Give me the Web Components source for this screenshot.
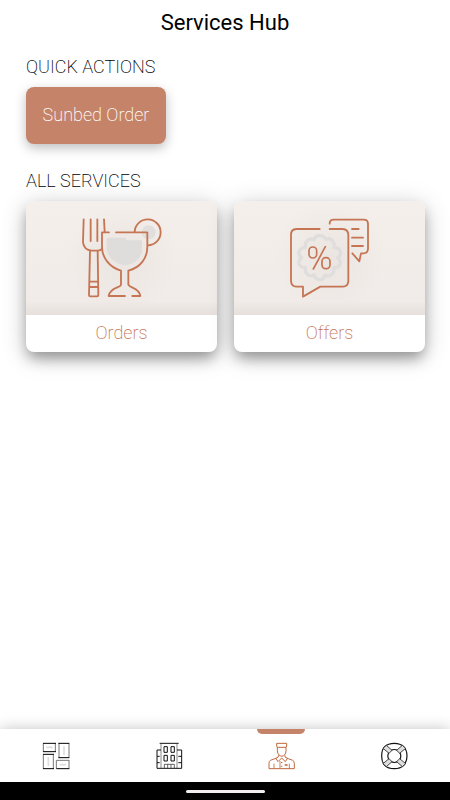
<!DOCTYPE html>
<html lang="en">
<head>
<meta charset="utf-8">
<meta name="viewport" content="width=device-width, initial-scale=1">
<title>Services Hub</title>
<style>
body {
  margin: 0;
  background: #fff;
  color: #000;
  font-family: Roboto, "Liberation Sans", sans-serif;
}
</style>
</head>
<body>
<hub-app>
  <hub-section title="QUICK ACTIONS">
    <quick-action>Sunbed Order</quick-action>
  </hub-section>
  <hub-section title="ALL SERVICES">
    <service-grid>
      <service-card icon="orders">Orders</service-card>
      <service-card icon="offers">Offers</service-card>
    </service-grid>
  </hub-section>
  <tab-bar slot="footer"></tab-bar>
</hub-app>

<script>
const icons = {
  orders: `
<svg viewBox="36 39 240 240" fill="none" stroke="#c67554" stroke-width="5.5" stroke-linecap="round" stroke-linejoin="round" aria-hidden="true">
  <circle cx="236" cy="82" r="21" fill="#e0dfde" stroke="none"/>
  <path d="M114 98H165Q169 98 169 106H216V140Q206 176 165 181Q119 172 110 136V102Q110 98 114 98Z" fill="#dedddc" stroke="none"/>
  <path d="M41 43L39 112Q42 135 65 137H84Q91 136 96 132M62 43V108M82 43V108M102 43L104 80"/>
  <path d="M60 139L57 270Q57 274 61 274H81Q85 274 85 270L83 139M60 230H84M60 246H84"/>
  <path d="M117 82H96V125C96 158 119 188 153 197V240C150 249 120 247 116 273H165M138 82H232V125C232 160 211 188 175 197V239C180 250 207 247 211 273H187"/>
  <path d="M194 80A39 39 0 1 1 234 121"/>
</svg>`,
  offers: `
<svg viewBox="30 39 240 240" fill="none" stroke="#c67554" stroke-width="5.5" stroke-linecap="round" stroke-linejoin="round" aria-hidden="true">
  <path d="M119 92Q132 90 137 103Q151 97 159 110Q165 118 161 128Q178 128 181 140Q184 151 173 158Q184 167 180 178Q175 189 161 188Q164 202 154 209Q145 216 135 210Q131 224 119 224Q107 223 103 210Q91 216 82 208Q73 200 77 188Q61 188 57 176Q55 166 65 158Q53 150 58 138Q64 127 77 128Q73 115 82 107Q92 99 102 104Q107 91 119 92Z" stroke="#dfdedd" stroke-width="10"/>
  <path d="M119 72H49Q33 73 33 89V228Q34 244 49 245H69V275L121 245H189Q204 244 205 228V89Q204 73 188 72H149"/>
  <path d="M149 56Q149 44 161 44H251Q264 44 264 57V132Q263 145 251 145H243L238 169L217 145M216 72H236M216 98H249M216 123H249"/>
  <path d="M136 125L100 192" stroke-width="5"/>
  <rect x="87" y="126" width="23" height="33" rx="11" stroke-width="5"/>
  <rect x="126" y="158" width="24" height="33" rx="11" stroke-width="5"/>
</svg>`,
  dashboard: `
<svg viewBox="37 36 84 84" fill="none" stroke="#777" stroke-width="3" aria-hidden="true">
  <path d="M41 40V65M77 40V65M88 40V83M118 40V83M41 73V116M71 73V116M80 91V116M118 91V116"/>
  <path d="M40 40H79M40 65H79M86 40H119M86 83H119M40 73H73M40 116H73M80 116H119" stroke="#000"/>
  <path d="M80 91H119"/>
  <path d="M50 52H69M103 49V75M56 81V108M90 104H109" stroke="#ddd" stroke-width="5"/>
</svg>`,
  hotel: `
<svg viewBox="44 36 84 84" fill="none" stroke="#111" stroke-width="3" aria-hidden="true">
  <path d="M62 42V115M110 42V115" stroke="#888"/>
  <path d="M58 40H115M62 60H50V115H124V60H110M50 79H58M50 98H58M114 79H124M114 98H124"/>
  <path d="M71 50H81V67H71ZM92 50H102V67H92ZM71 76H81V93H71ZM92 76H102V93H92Z"/>
  <path d="M72 115V103H102V115M82 103V115M92 103V115" stroke="#444" stroke-width="2.5"/>
</svg>`,
  services: `
<svg viewBox="52 60 84 84" fill="none" stroke="#c1683e" stroke-width="3" stroke-linejoin="round" aria-hidden="true">
  <path d="M81 64H111V72L109 76H83L81 72ZM83 76V86C84 108 109 108 109 86V76"/>
  <path d="M86 100V105L76 110L62 115Q58 117 58 124V140H134V124Q134 117 129 115L116 110L106 105V100M78 108L85 119L96 108L107 119L114 108"/>
  <path d="M73 125V140M119 125V140M91 117V140" stroke-width="2.5"/>
  <path d="M96 120V123M96 131V134M105 129H114" stroke-width="4"/>
</svg>`,
  support: `
<svg viewBox="46 36 84 84" fill="none" stroke="#111" stroke-width="3.5" aria-hidden="true">
  <path d="M89 40C99 40 110 43 117 50C124 57 127 67 127 78C127 89 124 99 117 106C110 113 99 116 89 116C79 116 67 113 60 106C53 99 51 89 51 78C51 67 53 57 60 50C67 43 79 40 89 40Z"/>
  <path d="M78 62Q89 55 100 62M105 67Q112 78 105 89M100 94Q89 101 78 94M73 89Q66 78 73 67"/>
  <path d="M55 55L65 46L82 61L73 70ZM113 46L123 55L105 70L96 61ZM105 86L123 101L113 110L96 95ZM73 86L82 95L65 110L55 101Z" fill="#dedede" stroke="#222" stroke-width="2.5"/>
</svg>`,
};

class HubApp extends HTMLElement {
  constructor() {
    super();
    this.attachShadow({ mode: "open" }).innerHTML = `
<style>
:host {
  display: flex;
  flex-direction: column;
  min-height: 100vh;
}
h1 {
  margin: 0;
  padding-top: 8px;
  font-size: 22px;
  font-weight: 400;
  line-height: 29px;
  text-align: center;
}
main {
  flex: 1;
  display: flex;
  flex-direction: column;
  gap: 26px;
  padding: 19px 25px 32px 26px;
}
</style>
<header><h1>Services Hub</h1></header>
<main><slot></slot></main>
<slot name="footer"></slot>`;
  }
}

class HubSection extends HTMLElement {
  constructor() {
    super();
    this.attachShadow({ mode: "open" }).innerHTML = `
<style>
:host {
  display: block;
}
h2 {
  margin: 0 0 10px;
  font-size: 18px;
  font-weight: 200;
  line-height: 21px;
}
</style>
<h2>${this.getAttribute("title") ?? ""}</h2>
<slot></slot>`;
  }
}

class QuickAction extends HTMLElement {
  constructor() {
    super();
    this.attachShadow({ mode: "open" }).innerHTML = `
<style>
:host {
  display: flex;
}
button {
  min-width: 140px;
  min-height: 57px;
  padding: 0 16px 2px;
  border: 0;
  border-radius: 8px;
  background: #c5846a;
  color: #fff;
  font: 200 18px/21px Roboto, "Liberation Sans", sans-serif;
  box-shadow: 0 4px 12px rgb(0 0 0 / 26%);
}
</style>
<button type="button"><slot></slot></button>`;
  }
}

class ServiceGrid extends HTMLElement {
  constructor() {
    super();
    this.attachShadow({ mode: "open" }).innerHTML = `
<style>
:host {
  display: grid;
  grid-template-columns: 1fr 1fr;
  gap: 17px;
}
</style>
<slot></slot>`;
  }
}

class ServiceCard extends HTMLElement {
  constructor() {
    super();
    this.attachShadow({ mode: "open" }).innerHTML = `
<style>
:host {
  display: block;
}
a {
  display: block;
  overflow: hidden;
  border-radius: 8px;
  background: #fff;
  color: #c67554;
  text-decoration: none;
  box-shadow: 0 8px 14px -2px rgb(0 0 0 / 34%), 0 4px 26px rgb(0 0 0 / 20%);
}
.picture {
  display: flex;
  justify-content: center;
  padding: 17px 0;
  background:
    linear-gradient(transparent 88%, rgb(120 90 80 / 8%)),
    radial-gradient(circle, #ebe5e1, transparent 50%),
    linear-gradient(#f4efea, #f0ebe8);
}
svg {
  width: 80px;
  height: 80px;
}
.label {
  display: block;
  padding: 7px 0 9px;
  font-size: 18px;
  font-weight: 200;
  line-height: 21px;
  text-align: center;
}
</style>
<a href="#${this.getAttribute("icon")}">
  <span class="picture">${icons[this.getAttribute("icon")] ?? ""}</span>
  <span class="label"><slot></slot></span>
</a>`;
  }
}

class TabBar extends HTMLElement {
  constructor() {
    super();
    const tabs = ["dashboard", "hotel", "services", "support"];
    this.attachShadow({ mode: "open" }).innerHTML = `
<style>
:host {
  display: block;
}
nav {
  display: grid;
  grid-template-columns: repeat(4, 1fr);
  background: #fff;
  box-shadow: 0 0 14px rgb(0 0 0 / 24%);
}
a {
  display: flex;
  flex-direction: column;
  align-items: center;
  gap: 8px;
  padding-bottom: 12px;
}
a::before {
  content: "";
  width: 48px;
  height: 5px;
  border-radius: 0 0 5px 5px;
}
a[aria-current]::before {
  background: #c5846a;
}
svg {
  width: 28px;
  height: 28px;
}
.system {
  position: relative;
  display: flex;
  justify-content: center;
  align-items: center;
  height: 18px;
  background: #000;
}
.system span {
  width: 79px;
  height: 3px;
  border-radius: 2px;
  background: #f1ecee;
}
</style>
<nav>
  ${tabs.map((t) => `<a href="#${t}" aria-label="${t}"${t === "services" ? ' aria-current="page"' : ""}>${icons[t]}</a>`).join("")}
</nav>
<div class="system"><span></span></div>`;
  }
}

customElements.define("hub-app", HubApp);
customElements.define("hub-section", HubSection);
customElements.define("quick-action", QuickAction);
customElements.define("service-grid", ServiceGrid);
customElements.define("service-card", ServiceCard);
customElements.define("tab-bar", TabBar);
</script>
</body>
</html>
